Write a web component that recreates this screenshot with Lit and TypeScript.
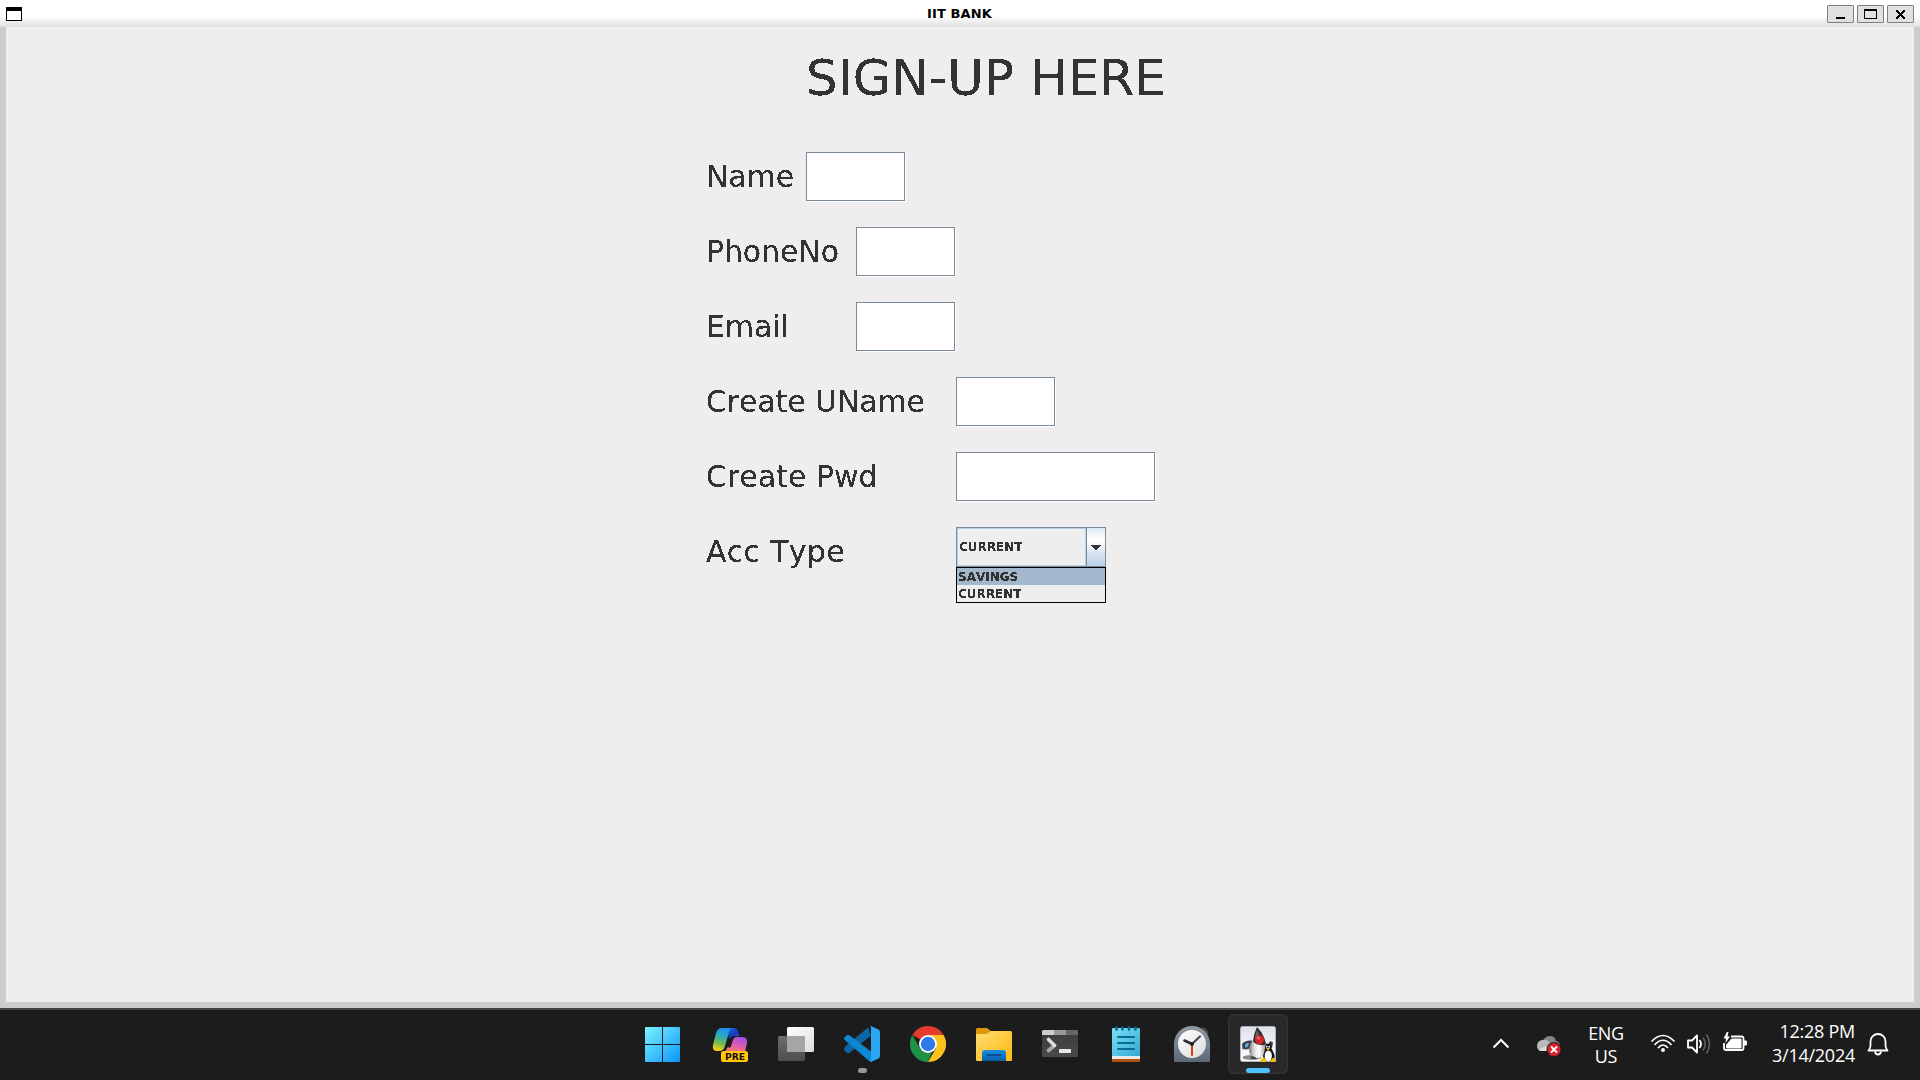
import { LitElement, html, css, svg, nothing } from "lit";
import { customElement, property } from "lit/decorators.js";

interface Field {
  label: string;
  size: string;
  wide?: boolean;
}

const FIELDS: Field[] = [
  { label: "Name", size: "w100" },
  { label: "PhoneNo", size: "w150" },
  { label: "Email", size: "w150" },
  { label: "Create UName", size: "w250" },
  { label: "Create Pwd", size: "w250 even", wide: true },
];

@customElement("window-bar")
class WindowBar extends LitElement {
  @property() caption = "";
  static styles = css`
    :host { display: block; }
    .bar {
      display: grid; grid-template-columns: 100px 1fr 100px; height: 27px;
      background: linear-gradient(#fff 0, #fff 16px, #dfdfdf 27px);
      padding: 0 6px; box-sizing: border-box;
    }
    .menu { margin-top: 7px; width: 16px; height: 14px; box-sizing: border-box; border: 1px solid #000; border-top-width: 4px; background: #fff; }
    .caption { text-align: center; font: bold 13px/27px "DejaVu Sans", sans-serif; color: #000; letter-spacing: 0.1px; }
    .caption span { display: block; line-height: 27px; padding-right: 1px; }
    .buttons { display: flex; justify-content: flex-end; gap: 3px; padding-top: 5px; }
    .btn { width: 27px; height: 18px; box-sizing: border-box; border: 1px solid #808080; border-radius: 1px; background: #e1e1e1; display: block; }
    svg { display: block; }
  `;
  render() {
    return html`<div class="bar">
      <div class="menu"></div>
      <div class="caption"><span>${this.caption}</span></div>
      <div class="buttons">
        <div class="btn"><svg width="25" height="16" shape-rendering="crispEdges"><rect x="8" y="11" width="9" height="2"/></svg></div>
        <div class="btn"><svg width="25" height="16" shape-rendering="crispEdges"><path fill-rule="evenodd" d="M6 3h13v10H6zM7 5v7h11V5z"/></svg></div>
        <div class="btn"><svg width="25" height="16" shape-rendering="crispEdges"><path d="M8 4h2v1h1v1h1v1h1v-1h1v-1h1v-1h2v2h-1v1h-1v1h-1v1h1v1h1v1h1v2h-2v-1h-1v-1h-1v-1h-1v1h-1v1h-1v1h-2v-2h1v-1h1v-1h1v-1h-1v-1h-1v-1h-1z"/></svg></div>
      </div>
    </div>`;
  }
}

@customElement("signup-form")
class SignupForm extends LitElement {
  static styles = css`
    :host { display: block; }
    .defs { position: absolute; width: 0; height: 0; }
    .form { padding: 25px 0 0 700px; font-family: "DejaVu Sans", sans-serif; color: #333; font-kerning: none; }
    .crisp { filter: url(#crisp); }
    h1 { margin: 0 0 50px 100px; font-weight: 400; font-size: 50px; line-height: 52px; height: 50px; white-space: nowrap; letter-spacing: 0.1px; }
    .row { display: flex; height: 50px; margin-bottom: 25px; }
    .label { font-size: 30px; line-height: 50px; white-space: nowrap; letter-spacing: -0.12px; }
    .label.even { letter-spacing: 0; }
    .label.loose { letter-spacing: 0.28px; }
    .w100 { width: 100px; }
    .w150 { width: 150px; }
    .w250 { width: 250px; }
    .input { width: 99px; height: 49px; box-sizing: border-box; border: 1px solid #7a8a99; background: #fff; box-shadow: 1px 1px 0 #fff; }
    .input.wide { width: 199px; }
    .select { width: 150px; }
    .combo { display: flex; height: 40px; box-sizing: border-box; border: 1px solid #7a8a99; }
    .value { flex: 1; box-sizing: border-box; border: 1px solid #b8cfe5; font: bold 12px/37px "DejaVu Sans", sans-serif; padding-left: 1px; }
    .arrow { width: 18px; border-left: 1px solid #7a8a99; background: linear-gradient(#dde8f3 0, #fff 30%, #fff 34%, #dde8f3 62%, #b8cfe5 100%); }
    .arrow svg { display: block; }
    .list { border: 1px solid #000; background: #eee; }
    .option { height: 17px; font: bold 12px/19px "DejaVu Sans", sans-serif; padding-left: 1px; }
    .option.on { background: #a3b8cc; }
    .option span, .value span { display: block; font-kerning: none; }
  `;
  render() {
    return html`
      <svg class="defs"><filter id="crisp" color-interpolation-filters="sRGB" x="0" y="-10%" width="100%" height="120%"><feComponentTransfer><feFuncA type="discrete" tableValues="0 0 1 1 1"/></feComponentTransfer></filter></svg>
      <div class="form">
        <h1 class="crisp">SIGN-UP HERE</h1>
        ${FIELDS.map((f) => html`<div class="row">
          <div class="label crisp ${f.size}">${f.label}</div>
          <div class="input ${f.wide ? "wide" : ""}"></div>
        </div>`)}
        <div class="row">
          <div class="label crisp w250 loose">Acc Type</div>
          <div class="select">
            <div class="combo">
              <div class="value"><span class="crisp">CURRENT</span></div>
              <div class="arrow"><svg width="18" height="38" shape-rendering="crispEdges"><path fill="#333" d="M4 17h10v1h-1v1h-1v1h-1v1h-1v1h-2v-1H7v-1H6v-1H5v-1H4z"/></svg></div>
            </div>
            <div class="list">
              <div class="option on"><span class="crisp">SAVINGS</span></div>
              <div class="option"><span class="crisp">CURRENT</span></div>
            </div>
          </div>
        </div>
      </div>`;
  }
}

const ICONS = [
  { name: "start", art: svg`
    <defs><linearGradient id="wn" gradientUnits="userSpaceOnUse" x1="1" y1="1" x2="36" y2="36"><stop offset="0" stop-color="#7df3ff"/><stop offset="1" stop-color="#0a94fb"/></linearGradient></defs>
    <path fill="url(#wn)" d="M2 1h16v17H1V2q0-1 1-1zM19 1h16q1 0 1 1v16H19zM1 19h17v17H2q-1 0-1-1zM19 19h17v16q0 1-1 1H19z"/>` },
  { name: "copilot", art: svg`
    <defs>
      <linearGradient id="cl" x1=".6" y1="0" x2=".3" y2="1"><stop offset="0" stop-color="#1e8ee8"/><stop offset=".35" stop-color="#27a8c8"/><stop offset=".65" stop-color="#6cb956"/><stop offset="1" stop-color="#f5cf0c"/></linearGradient>
      <linearGradient id="cr" x1=".8" y1="0" x2=".3" y2="1"><stop offset="0" stop-color="#9d50ee"/><stop offset=".5" stop-color="#dd5bb0"/><stop offset="1" stop-color="#ff7a65"/></linearGradient>
      <linearGradient id="ct" x1="0" y1="0" x2="1" y2="1"><stop offset="0" stop-color="#1677e6"/><stop offset=".6" stop-color="#1538bd"/><stop offset="1" stop-color="#2b62db"/></linearGradient>
    </defs>
    <path fill="url(#ct)" d="M13 2h9q3 0 4 3l1.500 5H22q-3 0-4 3l-2-5z"/>
    <path fill="url(#cl)" d="M10 2h11q-3 0-4 4l-4 14q-1 5-6 5H5q-5 0-4-6L4 7q1.500-5 6-5z"/>
    <path fill="url(#cr)" d="M24 11h6q6 0 5 6l-2 9H10q4 0 5-4l1-1q2 2 3-1l2-6q1-3 3-3z"/>
    <rect x="9" y="25" width="27" height="11" rx="2.500" fill="#ffc60a"/>
    <text x="13" y="33.500" font-family="DejaVu Sans" font-weight="bold" font-size="9.200" textLength="20" fill="#16130a">PRE</text>` },
  { name: "tasks", art: svg`
    <defs><linearGradient id="tv" x1="0" y1="0" x2="1" y2="1"><stop offset="0" stop-color="#fff"/><stop offset="1" stop-color="#dedede"/></linearGradient><linearGradient id="tg" x1="0" y1="0" x2="0" y2="1"><stop offset="0" stop-color="#6e6e6e"/><stop offset="1" stop-color="#4d4d4d"/></linearGradient></defs>
    <rect x="0" y="10" width="27" height="25" rx="1.500" fill="url(#tg)"/>
    <rect x="9" y="1" width="27" height="25" rx="1.500" fill="url(#tv)"/>
    <path fill="#a5a5a5" d="M9 10h17q1 0 1 1v15H10q-1 0-1-1z"/>` },
  { name: "code", dot: "idle", art: svg`
    <path fill="#0b66a4" d="M1 20.500l23-19 3 8L5.500 26.700q-1.500 1-2.800 0L.8 25q-1.700-1.500 0-3z"/>
    <path fill="#0d87cf" d="M.8 14Q-.8 12.500.8 11l2-1.800q1.200-1 2.700 0L27 25.500v10q-1 .300-2.500-1z"/>
    <path fill="#2aa6f2" d="M26 .3q.6-.6 1.500-.1l7 3.300Q36 4.300 36 6v24q0 1.700-1.500 2.500l-7 3.300q-1 .500-2-.500 1.500.5 1.500-1.500V2.200Q27 .300 26 .300z"/>` },
  { name: "browser", art: svg`
    <path fill="#e33b2e" d="M18 18L2.400 9a18 18 0 0 1 31.200 0z"/>
    <path fill="#fcc21b" d="M18 9h15.600A18 18 0 0 1 18 36l7.800-13.500z"/>
    <path fill="#1f9146" d="M2.400 9l7.800 13.500q4 6 11.800 4L18 36A18 18 0 0 1 2.400 9z"/>
    <circle cx="18" cy="18" r="9" fill="#fff"/><circle cx="18" cy="18" r="7.200" fill="#2f78ea"/>` },
  { name: "files", art: svg`
    <defs><linearGradient id="fo" x1="0" y1="0" x2="1" y2="1"><stop offset="0" stop-color="#ffdc70"/><stop offset="1" stop-color="#fdb914"/></linearGradient><linearGradient id="fb" x1="0" y1="0" x2="0" y2="1"><stop offset="0" stop-color="#1590e4"/><stop offset="1" stop-color="#075da9"/></linearGradient></defs>
    <path fill="#dc9a08" d="M1.500 2H10q1.500 0 2.500 1l3 3v5H0V3.500Q0 2 1.500 2z"/>
    <path fill="url(#fo)" d="M0 8h10q1.500 0 2.500-1l1-1q1-1 2-1H34.500Q36 5 36 6.500V34q0 1-1 1H1q-1 0-1-1z"/>
    <path fill="url(#fb)" d="M6 35v-8q0-3 3-3h18q3 0 3 3v8z"/><path stroke="#064f91" stroke-width="2" stroke-linecap="round" d="M11.500 29h13"/>` },
  { name: "terminal", art: svg`
    <defs><linearGradient id="te" x1="0" y1="0" x2="0" y2="1"><stop offset="0" stop-color="#3b3b3b"/><stop offset="1" stop-color="#4a4a4a"/></linearGradient></defs>
    <rect x="0" y="4" width="36" height="27" rx="1.500" fill="url(#te)"/>
    <path fill="#ccc" d="M1.500 4H12v5H0V5.500Q0 4 1.500 4z"/><path fill="#999" d="M12 4h12v5H12z"/><path fill="#666" d="M24 4h10.500Q36 4 36 5.500V9H24z"/>
    <path d="M6.500 24.500l6-5" stroke="#a8a8a8" stroke-width="3.600" stroke-linecap="round"/>
    <path d="M6.500 13.500l6 6" stroke="#dedede" stroke-width="3.600" stroke-linecap="round"/>
    <rect x="17" y="23" width="12" height="4" rx=".6" fill="#e6e6e6"/>` },
  { name: "notes", art: svg`
    <defs><linearGradient id="no" x1="0" y1="0" x2="1" y2="1"><stop offset="0" stop-color="#7be0f5"/><stop offset="1" stop-color="#35a9cf"/></linearGradient></defs>
    <path fill="#b5520c" d="M4 31h28v4q0 1-1 1H5q-1 0-1-1z"/><path fill="#e9e9e9" d="M4 28h28v5H4z"/>
    <path fill="url(#no)" d="M5 2h26q1 0 1 1v27H4V3q0-1 1-1z"/>
    <path stroke="#066b96" stroke-width="2.600" stroke-linecap="round" d="M8.500 1.500v2M14.500 1.500v2M21 1.500v2M27.500 1.500v2"/>
    <path stroke="#066b96" stroke-width="2" stroke-linecap="round" d="M10 11h16M10 17h16M10 23h16"/>` },
  { name: "clock", art: svg`
    <defs><linearGradient id="ck" x1="0" y1="0" x2="0" y2="1"><stop offset="0" stop-color="#909aa4"/><stop offset="1" stop-color="#5c6a78"/></linearGradient><linearGradient id="cf" x1="0" y1="0" x2="1" y2="1"><stop offset="0" stop-color="#fff"/><stop offset="1" stop-color="#dcdcdc"/></linearGradient></defs>
    <path stroke="#444" stroke-width="5" stroke-linecap="round" d="M29.500 4l2.500 2.500"/>
    <path fill="url(#ck)" d="M0 18a18 18 0 0 1 36 0v16.500q0 1.500-1.500 1.500h-33Q0 36 0 34.500z"/>
    <circle cx="18" cy="18" r="14" fill="url(#cf)"/>
    <path d="M18 18v11" stroke="#d93f0b" stroke-width="2" stroke-linecap="round"/>
    <path d="M18 18l-7.500-3.500" stroke="#2a2e32" stroke-width="2.600" stroke-linecap="round"/><path d="M18 18l8-7.500" stroke="#444a50" stroke-width="2.200" stroke-linecap="round"/>
    <circle cx="18" cy="18" r="2" fill="#222"/>` },
  { name: "java", dot: "active", art: svg`
    <defs><linearGradient id="jb" x1="0" y1="0" x2="0" y2="1"><stop offset="0" stop-color="#dfe1e8"/><stop offset="1" stop-color="#fff"/></linearGradient><linearGradient id="jd" x1="0" y1="0" x2="1" y2="0"><stop offset="0" stop-color="#777"/><stop offset=".3" stop-color="#ddd"/><stop offset=".6" stop-color="#fff"/><stop offset="1" stop-color="#999"/></linearGradient></defs>
    <rect x=".5" y=".5" width="35" height="35" rx="2" fill="url(#jb)" stroke="#a5b6c6"/>
    <ellipse cx="12" cy="31.500" rx="9.500" ry="2.500" fill="#8a8a8a"/>
    <path fill="#3a4149" d="M12 14.500q-7-.5-10 3.500l.5 5 4 .5 6-2z"/><path fill="#5ea9dd" d="M5 18.500q2.500-2.500 4-1.500l-1 3.500-2.500 1.500z"/>
    <path fill="url(#jd)" d="M13 14q-3.500 4-4 9 0 6 4 8 4 2 9 0l3-4 1-10z"/>
    <path fill="#2b2b2b" d="M17 1l4.500 5.500Q25 12 26 18q-2 1.500-4.500 1-5 0-8.500-3.500Q14 7 17 1z"/><path fill="#666" d="M17 4q1.500 2 2 5l-4 4q0-5 2-9z"/>
    <circle cx="19.500" cy="13.700" r="4.500" fill="#d9262c"/><circle cx="18.300" cy="12" r="1.500" fill="#ee6864"/>
    <path fill="#444" d="M10 31.500q2-2 5-.5l2 1.500q-4 1.500-7-1z"/><path fill="#333" d="M30 15l3 1.500-1 5-2 2-2-3z"/>
    <path fill="#151515" d="M28 17.500q3 0 3 4l2.500 5q2 4 .5 7l-4 2h-5l-2-4q0-3 1.500-6l.5-4q0-4 3-4z"/>
    <ellipse cx="28.300" cy="30" rx="3.600" ry="5.500" fill="#fff"/><circle cx="26.700" cy="20.700" r=".9" fill="#fff"/><circle cx="29.200" cy="20.700" r=".9" fill="#fff"/>
    <path fill="#f8bd13" d="M26 22h4l-2 2.500zM20 34.500l3.500-3.500q3 2 3.500 5h-7zM31 34l2.500-2.500L36 34.500V36h-6z"/>` },
];

@customElement("task-bar")
class TaskBar extends LitElement {
  static styles = css`
    :host { display: block; }
    .bar { display: flex; height: 72px; box-sizing: border-box; border-top: 2px solid #434343; background: #1c1c1c; color: #fff; font-family: "Open Sans", "Noto Sans", sans-serif; }
    .apps { display: flex; gap: 6px; padding: 4px 0 0 632px; }
    .app { width: 60px; height: 60px; box-sizing: border-box; display: flex; flex-direction: column; align-items: center; padding-top: 12px; border-radius: 6px; }
    .app.start { margin-right: 2px; }
    .app.java { background: #292929; box-shadow: inset 0 0 0 1.500px #333; }
    .app svg { display: block; flex: none; }
    .dot { margin-top: 6px; width: 9px; height: 5px; border-radius: 3px; background: #999; flex: none; }
    .dot.active { width: 24px; background: #4cc2ff; }
    .tray { margin-left: auto; display: flex; padding-right: 31px; }
    .tray svg { display: block; fill: none; stroke: #fff; }
    .lang { width: 60px; margin-left: 14px; padding-top: 12px; text-align: center; font-size: 18px; line-height: 23px; letter-spacing: -0.3px; }
    .time { width: 107px; padding-top: 9px; text-align: right; font-size: 18px; line-height: 24px; letter-spacing: -0.25px; }
    .chev { margin-top: 27px; }
    .cloud { margin: 23px 0 0 26px; }
    .wifi { margin: 24px 0 0 14px; }
    .vol { margin: 23px 0 0 10px; }
    .bat { margin: 20px 0 0 10px; }
    .bell { margin: 22px 0 0 12px; }
  `;
  render() {
    return html`<div class="bar">
      <div class="apps">
        ${ICONS.map((i) => html`<div class="app ${i.name}"><svg width="36" height="36" viewBox="0 0 36 36">${i.art}</svg>${i.dot ? html`<div class="dot ${i.dot}"></div>` : nothing}</div>`)}
      </div>
      <div class="tray">
        <svg class="chev" width="18" height="14"><path d="M1.500 10.500L9 3l7.500 7.500" stroke-width="2"/></svg>
        <svg class="cloud" width="26" height="26"><g stroke="none"><path fill="#858585" d="M7 8q2-5 7-5t6 5q4 .500 4 5t-5 5H9z"/><path fill="#b9b9b9" d="M6 18q-5 0-5-5t5-6q5-1.500 8 3l4 8z"/><path fill="#ddd" d="M3 17q4-4 12-4l2 5H6q-2 0-3-1z"/><circle cx="18" cy="16.500" r="7.500" fill="#1c1c1c"/><circle cx="18" cy="16.500" r="6.600" fill="#dc1f2b"/></g><path d="M15 13.500l6 6M21 13.500l-6 6" stroke-width="1.800"/></svg>
        <div class="lang">ENG<br>US</div>
        <svg class="wifi" width="26" height="20"><g stroke-width="1.700"><path d="M1.500 7.500Q13-4.500 24.500 7.500"/><path d="M4.500 11Q13 1.500 21.500 11"/><path d="M8 14Q13 8 18 14"/></g><circle cx="13" cy="16" r="2" fill="#fff" stroke="none"/></svg>
        <svg class="vol" width="26" height="22"><path d="M2 7.500h4l5-5v17l-5-5H2z" stroke-width="1.800" stroke-linejoin="round"/><path d="M13.500 7q3 4 0 8" stroke-width="1.800"/><path d="M17 4.500q4.500 6.500 0 13M20.500 1.500q6 9.500 0 19" stroke="#606060" stroke-width="1.600"/></svg>
        <svg class="bat" width="26" height="24"><path d="M9 6.500h10.500q2 0 2 2v9.500q0 2-2 2H4q-2 0-2-2V13" stroke-width="1.800"/><path d="M9.500 9h9.500v9H4.500v-3z" fill="#fff"/><path d="M22 10.500h2q1 0 1 1v3q0 1-1 1h-2z" fill="#fff" stroke="none"/><path d="M5 2L1.500 8.500H4L3.500 13 8 6.500H5.500L6.500 2z" fill="#fff" stroke="none"/></svg>
        <div class="time">12:28 PM<br>3/14/2024</div>
        <svg class="bell" width="22" height="25"><path d="M1.500 18.500q2-2.500 2-5V9.500a7.500 7.500 0 0 1 15 0v4q0 2.500 2 5z" stroke-width="1.800" stroke-linejoin="round"/><path d="M8 19.500q.5 3 3 3t3-3" stroke-width="1.800"/></svg>
      </div>
    </div>`;
  }
}

@customElement("app-root")
class AppRoot extends LitElement {
  static styles = css`
    :host { display: block; width: 1920px; height: 1080px; overflow: hidden; }
    .screen { display: flex; flex-direction: column; height: 1080px; background: #1c1c1c; }
    .body { flex: 1; box-sizing: border-box; border: 6px solid #ccc; border-top: 0; background: #eee; min-height: 0; }
  `;
  render() {
    return html`<div class="screen">
      <window-bar caption="IIT BANK"></window-bar>
      <div class="body"><signup-form></signup-form></div>
      <task-bar></task-bar>
    </div>`;
  }
}
